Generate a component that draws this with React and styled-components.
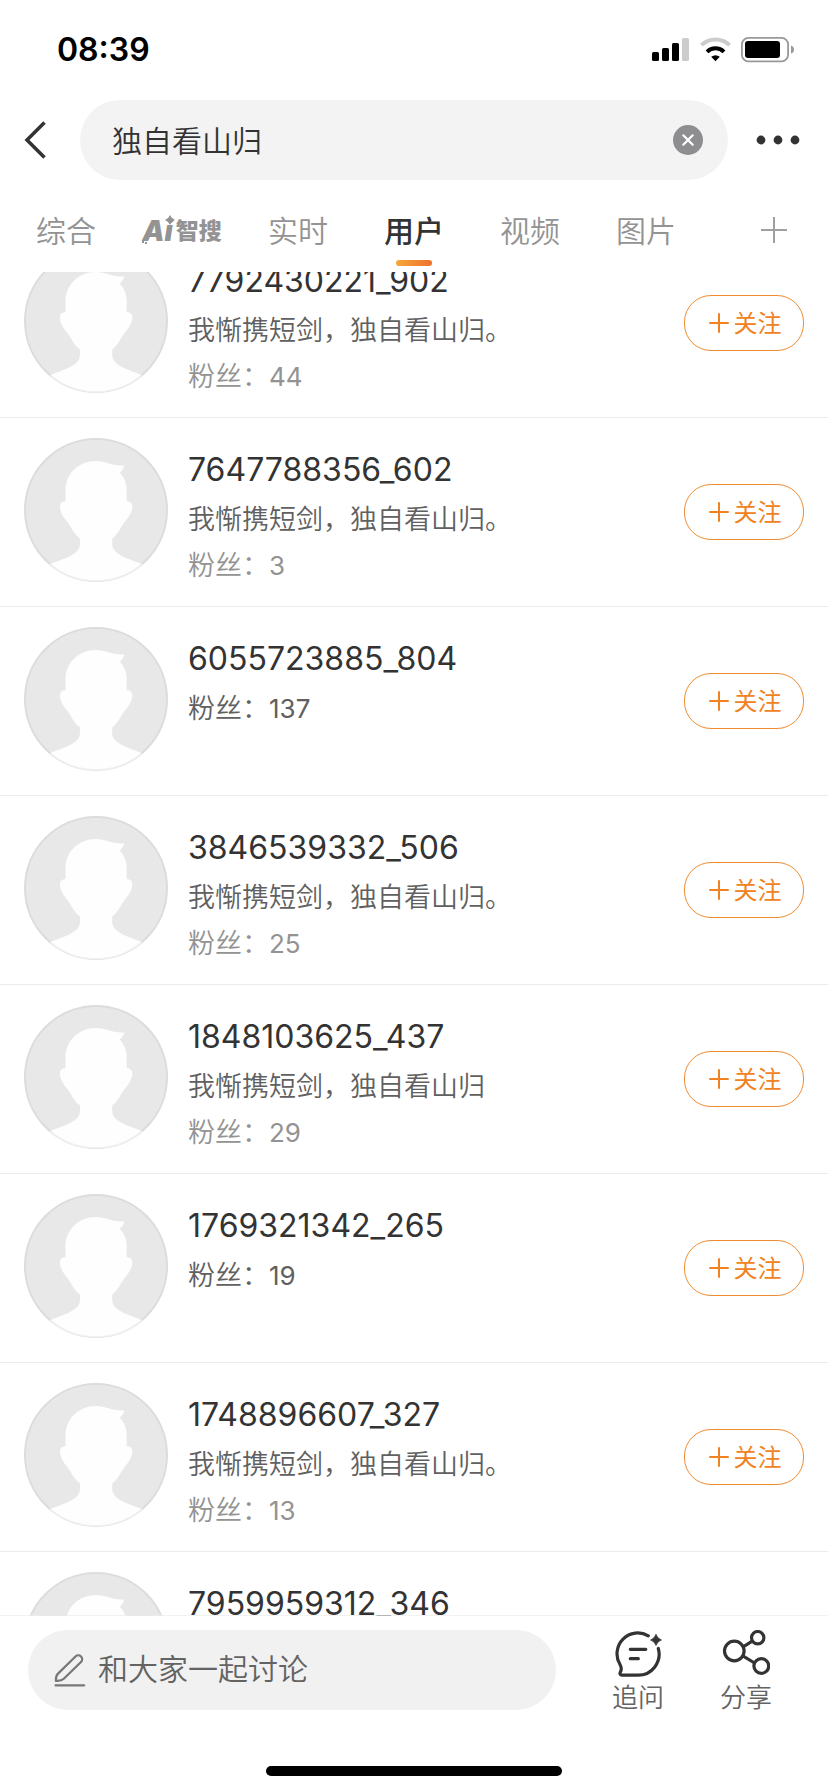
import styled, { createGlobalStyle } from 'styled-components';

const GlobalStyle = createGlobalStyle`
  * {
    box-sizing: border-box;
  }

  body {
    margin: 0;
    background: #fff;
    color: #333;
    font-family: Inter, "Noto Sans CJK SC", sans-serif;
  }

  button, input {
    margin: 0;
    padding: 0;
    border: 0;
    background: none;
    color: inherit;
    font: inherit;
    outline: none;
  }

  svg {
    display: block;
    flex: none;
  }
`;

const Screen = styled.div`
  display: flex;
  flex-direction: column;
  height: 100vh;
  overflow: hidden;
`;

const StatusBar = styled.div`
  display: flex;
  align-items: center;
  justify-content: space-between;
  height: 100px;
  padding: 0 34px 0 57px;
  color: #000;
`;

const Time = styled.time`
  font-size: 32px;
  font-weight: 600;
  line-height: 40px;
`;

const StatusIcons = styled.div`
  display: flex;
  align-items: center;
  gap: 10px;
`;

const SearchRow = styled.header`
  display: flex;
  align-items: center;
  height: 80px;
`;

const BackButton = styled.button`
  display: flex;
  align-items: center;
  width: 80px;
  height: 80px;
  padding-left: 24px;
`;

const SearchBox = styled.div`
  display: flex;
  flex: 1;
  align-items: center;
  height: 80px;
  padding: 0 25px 0 32px;
  border-radius: 40px;
  background: #f3f3f3;
`;

const TextInput = styled.input`
  flex: 1;
  min-width: 0;
  height: 80px;
  padding-bottom: 2px;
  font-size: 30px;
  font-weight: 350;
  line-height: 40px;

  &::placeholder {
    color: #636363;
    opacity: 1;
  }
`;

const IconButton = styled.button`
  display: flex;
`;

const MoreButton = styled.button`
  display: flex;
  align-items: center;
  justify-content: center;
  width: 100px;
  height: 80px;
`;

const Tabs = styled.nav`
  display: flex;
  flex: none;
  height: 92px;
  padding: 0 41px 0 8px;
`;

const Tab = styled.button`
  position: relative;
  display: flex;
  align-items: center;
  justify-content: center;
  width: 116px;
  padding-top: 5px;
  color: ${({ $active }) => ($active ? '#333' : '#939393')};
  font-size: 30px;
  font-weight: ${({ $active }) => ($active ? 500 : 350)};

  &::after {
    content: '';
    display: ${({ $active }) => ($active ? 'block' : 'none')};
    position: absolute;
    left: 40px;
    right: 40px;
    bottom: 6px;
    height: 6px;
    border-radius: 3px;
    background: linear-gradient(100deg, #f5a83a, #ef702e);
  }
`;

const AddTab = styled.button`
  display: flex;
  align-items: center;
  margin-left: auto;
  padding-top: 8px;
`;

const AiLogo = styled.span`
  position: relative;
  display: flex;
  align-items: center;
  gap: 3px;
  padding-top: 4px;
  color: #939393;
  font-size: 23px;
  font-weight: 900;
  line-height: 32px;

  svg {
    position: absolute;
    left: 0;
    top: 4px;
  }
`;

const AiLetters = styled.span`
  font-size: 28px;
  font-style: italic;
`;

const List = styled.ul`
  flex: 1;
  min-height: 0;
  margin: 0;
  padding: 0;
  overflow: hidden;
  list-style: none;
`;

const Row = styled.li`
  display: flex;
  align-items: center;
  gap: 20px;
  padding: 20px 24px 18px;
  border-bottom: 1px solid #ebebeb;

  /* the list is shown part-way scrolled under the tabs */
  &:first-child {
    margin-top: -43px;
  }
`;

const Info = styled.div`
  display: flex;
  flex: 1;
  flex-direction: column;
  gap: 2px;
  min-width: 0;
  min-height: 150px;
  padding-top: 12px;
`;

const Name = styled.h2`
  margin: 0 0 6px;
  font-size: 32px;
  font-weight: 400;
  line-height: 40px;
`;

const Line = styled.p`
  margin: 0;
  color: ${({ $muted }) => ($muted ? '#939393' : '#606060')};
  font-size: 27px;
  font-weight: 350;
  line-height: 44px;
`;

const Count = styled.span`
  font-size: 26px;
  font-weight: 400;
`;

const AvatarSvg = styled.svg`
  align-self: flex-start;
`;

const FollowButton = styled.button`
  display: flex;
  align-items: center;
  justify-content: center;
  gap: 5px;
  width: 120px;
  height: 56px;
  margin-bottom: 2px;
  padding-left: 2px;
  border: 1px solid #f08c30;
  border-radius: 27px;
  color: #f08222;
  font-size: 24px;
`;

const FollowText = styled.span`
  padding-bottom: 3px;
`;

/* the hairline lies over the last pixel of the list */
const Footer = styled.footer`
  position: relative;
  flex: none;
  margin-top: -1px;
  padding: 14px 28px 16px;
  border-top: 1px solid rgba(235, 235, 235, 0.7);
  background: #fff;
  background-clip: padding-box;
`;

const FooterRow = styled.div`
  display: flex;
  align-items: flex-start;
  height: 88px;
`;

const CommentBox = styled.label`
  display: flex;
  flex: 1;
  align-items: center;
  gap: 12px;
  min-width: 0;
  height: 80px;
  margin-right: 28px;
  padding: 0 26px;
  border-radius: 40px;
  background: #f1f1f1;
`;

const Action = styled.button`
  display: flex;
  flex: none;
  flex-direction: column;
  align-items: center;
  width: 108px;
  color: #636363;
  font-size: 26px;
  font-weight: 350;
  line-height: 40px;
`;

const HomeIndicator = styled.div`
  width: 296px;
  height: 10px;
  margin: 48px auto 0;
  border-radius: 5px;
  background: #000;
`;

const Signal = () => (
  <svg width="38" height="26" viewBox="0 0 38 26">
    <rect x="0" y="15" width="7" height="9" rx="1.5" />
    <rect x="10" y="11" width="7" height="13" rx="1.5" />
    <rect x="20" y="6" width="7" height="18" rx="1.5" />
    <rect x="30" y="1" width="7" height="23" rx="1.5" fill="#ccc" />
  </svg>
);

const Wifi = () => (
  <svg width="31" height="26" viewBox="0 0 31 26" fill="none" strokeWidth="4">
    <path d="M1.4 8.2A20 20 0 0 1 29.6 8.2" stroke="#ccc" />
    <path d="M7 14.8A12 12 0 0 1 24 14.8" stroke="#000" />
    <path d="M11.2 19.8A7 7 0 0 1 19.8 19.8L15.5 24.2Z" fill="#000" />
  </svg>
);

const Battery = () => (
  <svg width="53" height="26" viewBox="0 0 53 26">
    <rect x="0.9" y="0.9" width="46.2" height="23.4" rx="6.5" fill="none" stroke="#999" strokeWidth="1.8" />
    <rect x="4" y="4" width="35" height="17" rx="3" />
    <path d="M50 8.5Q53 9.5 53 12.5Q53 15.5 50 16.5Z" fill="#999" />
  </svg>
);

const Avatar = () => (
  <AvatarSvg width="144" height="144" viewBox="0 0 144 144">
    <circle cx="72" cy="72" r="72" fill="#e8e8e8" />
    <path
      d="M72 23C83 23 86 28 100.5 27.5C99 31 98 33 95.7 34.5C100 39 102.7 45 102.7 52V63.3C107 63 108.5 66 108.3 69.5C107.5 76 103 81 99.5 85.5C96 90 95 95 88.3 100.5C88 105 88 108 89.3 110.5C94 119 107 121 118.5 126.5A72 72 0 0 1 25.5 126.5C37 121 50 119 55 110.5C56.2 108 56 105 56 100.5C49 95 48 90 44.5 85.5C41 81 36.5 76 36 69.5C36 66 37 63 41.5 63.3V52C42 35 55 23 72 23Z"
      fill="#fefefe"
    />
    <circle cx="72" cy="72" r="71" fill="none" stroke="#000" strokeOpacity="0.05" strokeWidth="2" />
  </AvatarSvg>
);

const AskIcon = () => (
  <svg width="48" height="48" viewBox="0 0 48 48" fill="none" stroke="#333" strokeWidth="3.2" strokeLinecap="round" strokeLinejoin="round">
    <path d="M34.3 5.8A20.8 20.8 0 0 0 6 34.5C8 38 7.8 39.5 6.4 42C5.4 44 6.2 45.2 8 45.2H24A21 21 0 0 0 44.3 18.5" />
    <path d="M16.3 19.3H31.8M16.3 28.7H24.3" />
    <path d="M42 4.6Q43.4 8.6 47.4 10Q43.4 11.4 42 15.4Q40.6 11.4 36.6 10Q40.6 8.6 42 4.6Z" fill="#333" stroke="#333" strokeWidth="0.8" />
  </svg>
);

const ShareIcon = () => (
  <svg width="48" height="48" viewBox="0 0 48 48" fill="none" stroke="#333" strokeWidth="3.2">
    <circle cx="12.3" cy="21" r="9.8" />
    <circle cx="35.7" cy="7.7" r="6.2" />
    <circle cx="39.3" cy="36" r="7.4" />
    <path d="M21.2 16.8L30.2 11.2M21.2 26.2L32.6 33" />
  </svg>
);

const PenIcon = () => (
  <svg width="32" height="33" viewBox="0 0 32 33" fill="none" stroke="#777" strokeWidth="2.2" strokeLinecap="round" strokeLinejoin="round">
    <path d="M1.9 26.8C1.7 24.2 2.1 21.5 4 19.6L21.5 2.5A3.8 3.8 0 0 1 27 8L9.8 24.8C7.8 26.7 4.5 27 1.9 26.8Z" />
    <path d="M1.5 31.3H30.2" />
  </svg>
);

const tabs = ['综合', 'Ai智搜', '实时', '用户', '视频', '图片'];

const users = [
  { name: '7792430221_902', bio: '我惭携短剑，独自看山归。', fans: 44 },
  { name: '7647788356_602', bio: '我惭携短剑，独自看山归。', fans: 3 },
  { name: '6055723885_804', fans: 137 },
  { name: '3846539332_506', bio: '我惭携短剑，独自看山归。', fans: 25 },
  { name: '1848103625_437', bio: '我惭携短剑，独自看山归', fans: 29 },
  { name: '1769321342_265', fans: 19 },
  { name: '1748896607_327', bio: '我惭携短剑，独自看山归。', fans: 13 },
  { name: '7959959312_346' },
];

const AiTabLabel = () => (
  <AiLogo>
    <AiLetters>Ai</AiLetters>
    <span>智搜</span>
    <svg width="34" height="32" viewBox="0 0 34 32" fill="#939393">
      <path d="M28 0Q29.4 3.6 33 5Q29.4 6.4 28 10Q26.6 6.4 23 5Q26.6 3.6 28 0Z" />
      <path d="M0 26H2V28H0ZM3 27H5V29H3Z" />
    </svg>
  </AiLogo>
);

const UserRow = ({ user }) => (
  <Row>
    <Avatar />
    <Info>
      <Name>{user.name}</Name>
      {user.bio && <Line>{user.bio}</Line>}
      {user.fans && (
        <Line $muted={Boolean(user.bio)}>
          粉丝：<Count>{user.fans}</Count>
        </Line>
      )}
    </Info>
    <FollowButton type="button">
      <svg width="20" height="20" viewBox="0 0 20 20" stroke="currentColor" strokeWidth="2" strokeLinecap="round">
        <path d="M10 1V19M1 10H19" />
      </svg>
      <FollowText>关注</FollowText>
    </FollowButton>
  </Row>
);

const App = () => {
  return (
    <Screen>
      <GlobalStyle />
      <StatusBar>
        <Time>08:39</Time>
        <StatusIcons>
          <Signal />
          <Wifi />
          <Battery />
        </StatusIcons>
      </StatusBar>

      <SearchRow>
        <BackButton type="button" aria-label="返回">
          <svg width="22" height="40" viewBox="0 0 22 40" fill="none" stroke="#333" strokeWidth="3.5">
            <path d="M20.5 2.5L3 20L20.5 37.5" />
          </svg>
        </BackButton>
        <SearchBox>
          <TextInput type="text" aria-label="搜索" defaultValue="独自看山归" />
          <IconButton type="button" aria-label="清除">
            <svg width="30" height="30" viewBox="0 0 30 30">
              <circle cx="15" cy="15" r="15" fill="#8e8e90" />
              <path d="M10.3 10.3L19.7 19.7M19.7 10.3L10.3 19.7" stroke="#fff" strokeWidth="2.2" strokeLinecap="round" />
            </svg>
          </IconButton>
        </SearchBox>
        <MoreButton type="button" aria-label="更多">
          <svg width="44" height="10" viewBox="0 0 44 10" fill="#333">
            <circle cx="5" cy="5" r="4.4" />
            <circle cx="22" cy="5" r="4.4" />
            <circle cx="39" cy="5" r="4.4" />
          </svg>
        </MoreButton>
      </SearchRow>

      <Tabs>
        {tabs.map((tab) => (
          <Tab key={tab} type="button" $active={tab === '用户'}>
            {tab === 'Ai智搜' ? <AiTabLabel /> : tab}
          </Tab>
        ))}
        <AddTab type="button" aria-label="添加">
          <svg width="26" height="26" viewBox="0 0 26 26" stroke="#a0a0a0" strokeWidth="2">
            <path d="M13 0V26M0 13H26" />
          </svg>
        </AddTab>
      </Tabs>

      <List>
        {users.map((user) => (
          <UserRow key={user.name} user={user} />
        ))}
      </List>

      <Footer>
        <FooterRow>
          <CommentBox>
            <PenIcon />
            <TextInput type="text" aria-label="评论" placeholder="和大家一起讨论" />
          </CommentBox>
          <Action type="button">
            <AskIcon />
            追问
          </Action>
          <Action type="button">
            <ShareIcon />
            分享
          </Action>
        </FooterRow>
        <HomeIndicator />
      </Footer>
    </Screen>
  );
};

export default App;
